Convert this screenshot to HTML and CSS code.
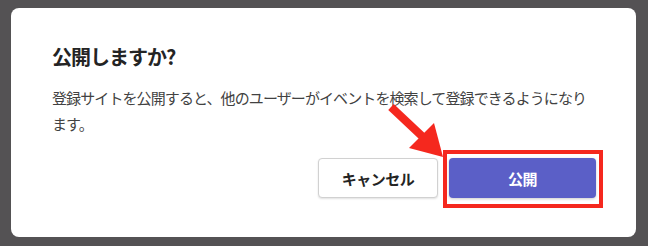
FILE: index.html
```html
<!DOCTYPE html>
<html lang="ja">
<head>
<meta charset="utf-8">
<link rel="stylesheet" href="styles.css">
</head>
<body>
<div class="dialog">
  <h1 class="title">公開しますか?</h1>
  <p class="desc">登録サイトを公開すると、他のユーザーがイベントを検索して登録できるようになります。</p>
  <div class="actions">
    <button class="btn btn-secondary">キャンセル</button>
    <button class="btn btn-primary">公開</button>
  </div>
</div>
<div class="highlight"></div>
<svg class="arrow" width="648" height="246" viewBox="0 0 648 246">
  <line x1="391" y1="107" x2="425" y2="139" stroke="#f5281e" stroke-width="8"/>
  <polygon points="443,157 409,148 434,123" fill="#f5281e"/>
</svg>
</body>
</html>
```

FILE: styles.css
```css
html, body {
  margin: 0;
  padding: 0;
}
body {
  width: 648px;
  height: 246px;
  background: #545254;
  font-family: "Noto Sans CJK JP", "Noto Sans", sans-serif;
  position: relative;
  overflow: hidden;
  padding-top: 8px;
  box-sizing: border-box;
}
.dialog {
  margin-left: 11px;
  width: 625px;
  height: 229px;
  box-sizing: border-box;
  background: #ffffff;
  border-radius: 8px;
  padding: 35px 40px 0 41px;
  display: flex;
  flex-direction: column;
}
.title {
  margin: 0;
  font-size: 20px;
  line-height: 28px;
  font-weight: 700;
  color: #242424;
  letter-spacing: -1px;
}
.desc {
  margin: 14px 0 0 0;
  font-size: 15px;
  line-height: 26px;
  color: #424242;
  letter-spacing: -0.9px;
}
.actions {
  margin-top: 21px;
  display: flex;
  justify-content: flex-end;
  gap: 11px;
}
.btn {
  font-family: inherit;
  font-size: 15px;
  font-weight: 700;
  border-radius: 4px;
  height: 40px;
  box-sizing: border-box;
  cursor: pointer;
  letter-spacing: -0.5px;
}
.btn-secondary {
  width: 120px;
  background: #ffffff;
  color: #242424;
  border: 1px solid #d1d1d1;
  box-shadow: 0 1px 2px rgba(0,0,0,0.12);
}
.btn-primary {
  width: 147px;
  background: #5b5fc7;
  color: #ffffff;
  border: none;
  box-shadow: 0 1px 3px rgba(0,0,0,0.2);
}
.highlight {
  position: absolute;
  left: 443px;
  top: 150px;
  width: 160px;
  height: 58px;
  box-sizing: border-box;
  border: 4px solid #f5281e;
}
.arrow {
  position: absolute;
  left: 0;
  top: 0;
  pointer-events: none;
}
```
